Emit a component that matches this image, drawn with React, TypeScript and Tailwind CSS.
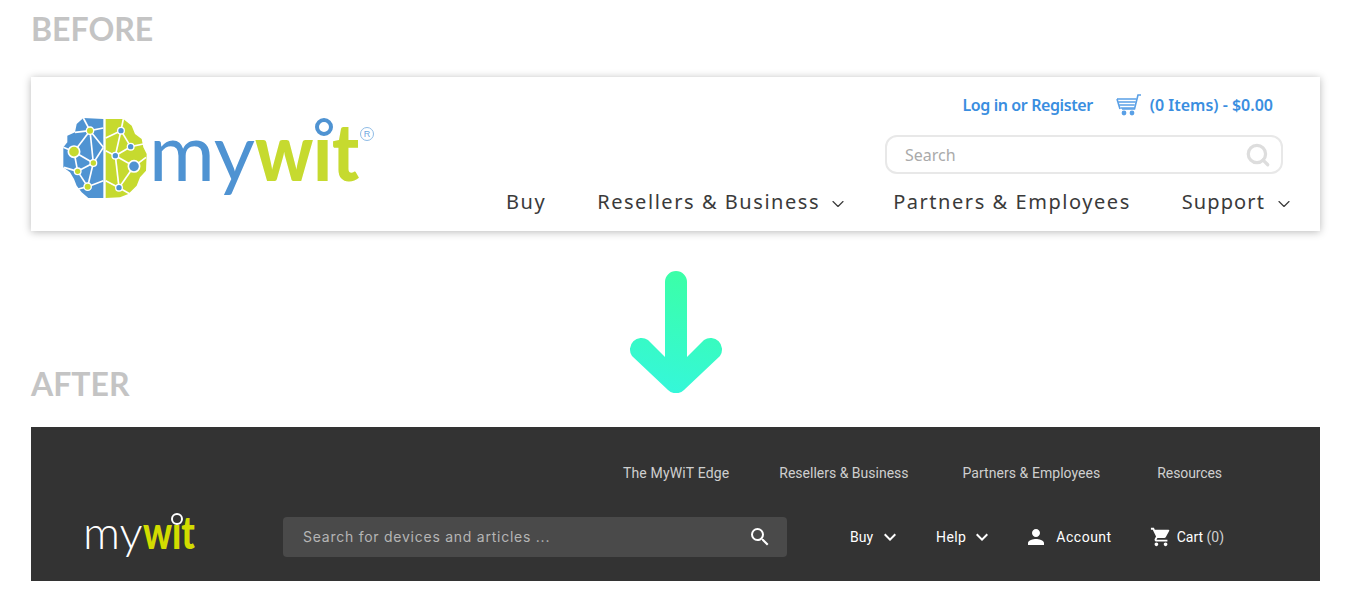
import React from "react";
import { MdSearch, MdKeyboardArrowDown, MdPerson, MdShoppingCart } from "react-icons/md";
import { LuSearch, LuChevronDown } from "react-icons/lu";

const leftLines = [
  [90, 50, 70, 12], [90, 50, 130, 42], [90, 50, 45, 55], [90, 50, 42, 113], [90, 50, 100, 147], [42, 113, 100, 147],
  [42, 113, 10, 100], [42, 113, 53, 172], [100, 147, 53, 172], [100, 147, 83, 218], [53, 172, 83, 218], [83, 218, 130, 200],
  [100, 147, 130, 100], [130, 100, 90, 50], [53, 172, 12, 160], [83, 218, 55, 225],
];
const rightLines = [
  [183, 50, 137, 72], [183, 50, 212, 98], [183, 50, 166, 125], [212, 98, 166, 125], [212, 98, 250, 90], [166, 125, 137, 110],
  [166, 125, 222, 157], [222, 157, 177, 221], [166, 125, 177, 221], [177, 221, 137, 200], [222, 157, 258, 130], [183, 50, 190, 15], [177, 221, 210, 240],
];

function Brain() {
  return (
    <svg viewBox="0 0 270 270" className="w-[90px] h-[90px] shrink-0">
      <polygon fill="#4f93d2" points="130,15 70,12 50,30 45,55 22,65 22,85 10,100 10,160 30,175 42,195 50,215 65,235 85,252 130,252" />
      <polygon fill="#c6da2f" points="137,15 190,15 215,35 225,60 245,75 250,100 260,120 258,170 240,190 230,215 205,240 180,250 137,252" />
      <g stroke="#fff" strokeWidth="5">
        {leftLines.concat(rightLines).map((l, i) => (
          <line key={i} x1={l[0]} y1={l[1]} x2={l[2]} y2={l[3]} />
        ))}
      </g>
      {[[90, 50, 11], [100, 147, 10], [53, 172, 10], [83, 218, 11]].map((d, i) => (
        <circle key={i} cx={d[0]} cy={d[1]} r={d[2]} fill="#c6da2f" stroke="#fff" strokeWidth="4" />
      ))}
      <circle cx="42" cy="113" r="17" fill="#c6da2f" stroke="#fff" strokeWidth="5" />
      {[[183, 50, 10], [212, 98, 10], [166, 125, 10], [177, 221, 10]].map((d, i) => (
        <circle key={i} cx={d[0]} cy={d[1]} r={d[2]} fill="#4f93d2" stroke="#fff" strokeWidth="4" />
      ))}
      <circle cx="222" cy="157" r="17" fill="#4f93d2" stroke="#fff" strokeWidth="5" />
    </svg>
  );
}

function CartBlue() {
  return (
    <svg viewBox="0 0 26 22" className="w-[26px] h-[22px]" fill="none" stroke="#5aa0e6" strokeWidth="1.6">
      <path d="M25 1h-3l-3.5 14H6" />
      <path d="M1 5h19.5M2.2 8h17.5M3.2 11h15.5M4.5 14h13.5" />
      <path d="M1 5l3 10" />
      <circle cx="8" cy="19" r="1.6" fill="#5aa0e6" />
      <circle cx="16" cy="19" r="1.6" fill="#5aa0e6" />
    </svg>
  );
}

function BeforeCard() {
  return (
    <div className="h-[154px] bg-white shadow-[0_1px_8px_rgba(0,0,0,0.28)] flex justify-between pl-[29px] pr-[26px]">
      <div className="flex items-start pt-[37px]">
        <Brain />
        <div className="relative ml-[-1px] mt-[-14px] flex font-['Lato',sans-serif] text-[80px] leading-[100px]">
          <span className="text-[#4f93d2]">my</span>
          <span className="inline-block origin-left scale-x-[0.9] font-black text-[#c6da2f]">wit</span>
          <span className="absolute left-[166px] top-[18px] w-[18px] h-[18px] rounded-full bg-white border-[4px] border-[#4f93d2]" />
          <span className="absolute left-[211px] top-[27px] w-[14px] h-[14px] rounded-full border border-[#8fbce6] text-[#6fa8df] text-[9px] leading-[12px] text-center font-['Liberation_Sans',sans-serif]">R</span>
        </div>
      </div>
      <div className="flex flex-col items-end pt-[17px] font-['Noto_Sans',sans-serif]">
        <div className="flex items-center mr-[21px] h-[22px] text-[16px] font-semibold text-[#3a8ee0]">
          <span className="tracking-[-0.4px]">Log in or Register</span>
          <span className="ml-[23px]"><CartBlue /></span>
          <span className="ml-[8px]">(0 Items) - $0.00</span>
        </div>
        <div className="mt-[19px] mr-[11px] w-[398px] h-[39px] rounded-[12px] border-2 border-[#e8e8e8] flex items-center justify-between pl-[18px] pr-[10px] text-[16px] text-[#aaaaaa]">
          <span>Search</span>
          <LuSearch className="w-[26px] h-[26px] text-[#dddddd]" strokeWidth={3} />
        </div>
        <nav className="mt-[13px] flex items-center text-[#3a3a3a] text-[20px] tracking-[1.55px] leading-[30px]">
          <span>Buy</span>
          <span className="ml-[51px]">Resellers &amp; Business</span>
          <LuChevronDown className="ml-[8px] mt-[3px] w-[20px] h-[20px]" strokeWidth={1.4} />
          <span className="ml-[45px]">Partners &amp; Employees</span>
          <span className="ml-[51px] tracking-[1.1px]">Support</span>
          <LuChevronDown className="ml-[9px] mt-[3px] w-[20px] h-[20px]" strokeWidth={1.4} />
        </nav>
      </div>
    </div>
  );
}

function Arrow() {
  return (
    <svg viewBox="0 0 96 122" className="w-[96px] h-[122px] mt-[40px]" fill="none">
      <defs>
        <linearGradient id="arrowGrad" x1="0.62" y1="0" x2="0.42" y2="1">
          <stop offset="0" stopColor="#3bffa6" />
          <stop offset="1" stopColor="#35f7da" />
        </linearGradient>
      </defs>
      <path d="M37 11a11 11 0 0 1 22 0V86L76 69a11.5 11.5 0 0 1 16 16L56 119a11.5 11.5 0 0 1-16 0L4 85a11.5 11.5 0 0 1 16-16L37 86z" fill="url(#arrowGrad)" />
    </svg>
  );
}

function AfterBar() {
  return (
    <div className="h-[154px] bg-[#333333] flex flex-col font-['Roboto',sans-serif]">
      <div className="flex justify-end pr-[98px] pt-[37px] text-[14px] leading-[18px] text-[#cfcfcf]">
        <span className="tracking-[0.15px]">The MyWiT Edge</span>
        <span className="ml-[50px]">Resellers &amp; Business</span>
        <span className="ml-[54px] tracking-[0.05px]">Partners &amp; Employees</span>
        <span className="ml-[57px] tracking-[-0.1px]">Resources</span>
      </div>
      <div className="flex items-center mt-[32px] pl-[52px]">
        <div className="relative w-[110px] flex font-['Lato',sans-serif] text-[46px] leading-[56px] mt-[-10px]">
          <span className="font-light text-white">my</span>
          <span className="inline-block origin-left scale-x-[0.78] font-black text-[#d2dc00]">wit</span>
          <span className="absolute left-[88px] top-[9px] w-[12px] h-[12px] rounded-full bg-[#333333] border-2 border-white" />
        </div>
        <div className="ml-[90px] w-[504px] h-[40px] rounded-[4px] bg-[#4a4a4a] flex items-center justify-between pl-[20px] pr-[15px] font-['Inter',sans-serif] text-[14px] tracking-[0.75px] text-[#b5b5b5]">
          <span className="-mt-[2px]">Search for devices and articles ...</span>
          <MdSearch className="w-[24px] h-[24px] text-white" />
        </div>
        <div className="flex items-center text-white text-[14px]">
          <span className="ml-[63px]">Buy</span>
          <MdKeyboardArrowDown className="ml-[5px] w-[24px] h-[24px]" />
          <span className="ml-[34px] tracking-[0.4px]">Help</span>
          <MdKeyboardArrowDown className="ml-[4px] w-[24px] h-[24px]" />
          <MdPerson className="ml-[30px] w-[24px] h-[24px]" />
          <span className="ml-[8px] tracking-[0.5px]">Account</span>
          <MdShoppingCart className="ml-[38px] w-[22px] h-[22px]" />
          <span className="ml-[5px] text-[14px]">Cart <span className="text-[#cfcfcf]">(0)</span></span>
        </div>
      </div>
    </div>
  );
}

export default function App() {
  return (
    <div className="w-[1350px] h-[600px] bg-white px-[30px] overflow-hidden">
      <div className="w-[1290px] pl-[1px] pr-0">
        <div className="h-[77px] font-['Lato',sans-serif] font-bold text-[32px] leading-[58px] text-[#c4c4c4]">BEFORE</div>
        <BeforeCard />
        <div className="grid h-[196px]">
          <div className="col-start-1 row-start-1 justify-self-center"><Arrow /></div>
          <div className="col-start-1 row-start-1 self-end h-[58px] font-['Lato',sans-serif] font-bold text-[32px] leading-[30px] text-[#c4c4c4]">AFTER</div>
        </div>
        <AfterBar />
      </div>
    </div>
  );
}
